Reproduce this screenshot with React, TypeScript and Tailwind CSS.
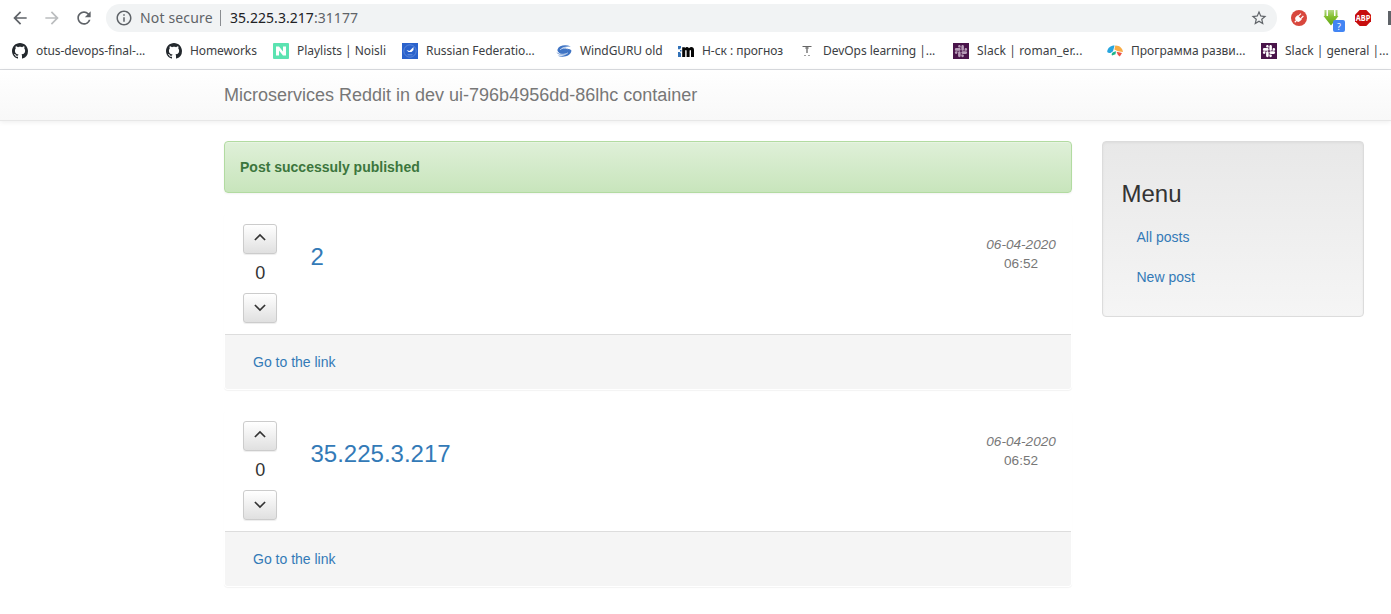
import type { ReactNode } from "react";
import { FaSlack } from "react-icons/fa";
import { MdArrowBack, MdArrowForward, MdRefresh, MdInfoOutline, MdStarBorder } from "react-icons/md";

const GithubIcon = () => (
  <svg width="16" height="16" viewBox="0 0 16 16" fill="#24292e">
    <path d="M8 0C3.58 0 0 3.58 0 8c0 3.54 2.29 6.53 5.47 7.59.4.07.55-.17.55-.38 0-.19-.01-.82-.01-1.49-2.01.37-2.53-.49-2.69-.94-.09-.23-.48-.94-.82-1.13-.28-.15-.68-.52-.01-.53.63-.01 1.08.58 1.23.82.72 1.21 1.87.87 2.33.66.07-.52.28-.87.51-1.07-1.78-.2-3.64-.89-3.64-3.95 0-.87.31-1.59.82-2.15-.08-.2-.36-1.02.08-2.12 0 0 .67-.21 2.2.82.64-.18 1.32-.27 2-.27.68 0 1.36.09 2 .27 1.53-1.04 2.2-.82 2.2-.82.44 1.1.16 1.92.08 2.12.51.56.82 1.27.82 2.15 0 3.07-1.87 3.75-3.65 3.95.29.25.54.73.54 1.48 0 1.07-.01 1.93-.01 2.2 0 .21.15.46.55.38A8.013 8.013 0 0016 8c0-4.42-3.58-8-8-8z" />
  </svg>
);

const NoisliIcon = () => (
  <svg width="16" height="16" viewBox="0 0 16 16">
    <rect width="16" height="16" rx="1" fill="#5be3b1" />
    <path d="M3 3.500H6L10 8.600V3.500H13V12.500H10L6 7.400V12.500H3Z" fill="#fff" />
  </svg>
);

const ChessIcon = () => (
  <svg width="16" height="16" viewBox="0 0 16 16">
    <rect width="16" height="16" fill="#2a62cc" />
    <circle cx="8" cy="8" r="6.2" fill="none" stroke="#6f96df" strokeWidth="0.7" />
    <path d="M4.500 7L7.500 8L11.500 4V7L9.500 9H6.500Z" fill="#fff" />
    <path d="M5.500 11.800h5" stroke="#7fa3e4" strokeWidth="0.8" />
  </svg>
);

const WindguruIcon = () => (
  <svg width="16" height="16" viewBox="0 0 16 16">
    <ellipse cx="8" cy="8.2" rx="5.6" ry="3.6" fill="#3f74c4" />
    <path d="M1.500 6.500C3 2.300 9.500 1.200 14.800 3.600C10.500 3.300 6.500 3.600 4.200 6.500C3.400 7.600 3.800 9 4.800 9.800C2.500 9.400 1 8.300 1.500 6.500Z" fill="#3f74c4" />
    <path d="M15.400 7.500C15.400 12.500 8 15.200 1.600 12.700C6 12.900 10 12.400 12 9.700C13 8.200 12.500 6.700 11.400 5.900C13.800 5.900 15.200 6.500 15.400 7.500Z" fill="#3f74c4" />
    <path d="M4.200 6.700C6 4.800 9.200 4.800 11.800 5.800" stroke="#fff" strokeWidth="0.7" fill="none" />
    <path d="M0.800 9.400C3.500 11.700 8.500 12 11.800 9.900" stroke="#fff" strokeWidth="0.7" fill="none" />
    <path d="M0.500 8.800C2 11 5.500 11.900 8.500 11.300C5.500 12.500 1 11.800 0.500 8.800Z" fill="#3f74c4" />
  </svg>
);

const ForecastIcon = () => (
  <svg width="16" height="16" viewBox="0 0 16 16">
    <path d="M0 3h3v2l-1.2 1.300H0ZM0 9h1.800L3 10.500V14H0ZM2 7h1.500v1.500H2Z" fill="#3272b8" />
    <path d="M4.200 4.200H6.900V5.200C8 3.700 10 3.700 11 5.200C12.700 3.400 16 3.700 16 7V14H13V7.500Q12.300 6.600 11.600 7.500V14H8.600V7.500Q7.900 6.600 7.200 7.500V14H4.200Z" fill="#050505" />
  </svg>
);

const LearningIcon = () => (
  <svg width="16" height="16" viewBox="0 0 16 16" fill="none" stroke="#666">
    <path d="M3.500 3.500h9" strokeWidth="1" />
    <path d="M6 5h4" strokeWidth="0.8" />
    <path d="M8 4v6" strokeWidth="1.3" />
    <path d="M5 12.500h2M9 12.500h2" strokeWidth="0.9" opacity="0.7" />
  </svg>
);

const SlackIcon = ({ dim }: { dim?: boolean }) => (
  <span className={`flex size-4 items-center justify-center bg-[#4a154b] ${dim ? "text-[#b79db8]" : "text-white"}`}>
    <FaSlack size={14} />
  </span>
);

const CourseIcon = () => (
  <svg width="16" height="16" viewBox="0 0 16 16">
    <path d="M0.200 8.600C0.500 5 3.500 2.500 7.600 2.500L6 8.200L3.500 9.900C1.500 10.300 0.200 9.800 0.200 8.600Z" fill="#27a5de" />
    <path d="M8.300 2.500C12.500 2.300 15.800 5.300 15.900 9L11 8.200L7.400 6.500Z" fill="#f9ac45" />
    <path d="M6.500 9L9 8.300L8.500 11.200L5 12.600Q3.800 10.500 6.500 9Z" fill="#1bb58b" />
    <path d="M9.500 8.700L15 9.900L12.800 13.500Q10.500 12.200 9.500 8.700Z" fill="#ec5146" />
  </svg>
);

type Bookmark = { label: string; layout: string; icon: ReactNode };

const bookmarks: Bookmark[] = [
  { label: "otus-devops-final-...", layout: "w-[154px] tracking-[-0.08px]", icon: <GithubIcon /> },
  { label: "Homeworks", layout: "w-[107px] tracking-[-0.1px]", icon: <GithubIcon /> },
  { label: "Playlists | Noisli", layout: "w-[129px] tracking-[-0.03px]", icon: <NoisliIcon /> },
  { label: "Russian Federatio...", layout: "w-[154px] tracking-[-0.05px]", icon: <ChessIcon /> },
  { label: "WindGURU old", layout: "w-[122px] tracking-[-0.1px]", icon: <WindguruIcon /> },
  { label: "Н-ск : прогноз", layout: "w-[121px] tracking-[-0.05px]", icon: <ForecastIcon /> },
  { label: "DevOps learning |...", layout: "w-[154px] tracking-[-0.05px]", icon: <LearningIcon /> },
  { label: "Slack | roman_er...", layout: "w-[154px] tracking-[0.1px]", icon: <SlackIcon dim /> },
  { label: "Программа разви...", layout: "w-[154px]", icon: <CourseIcon /> },
  { label: "Slack | general |...", layout: "w-[130px]", icon: <SlackIcon /> },
];

const PlugIcon = () => (
  <svg width="16" height="16" viewBox="0 0 16 16">
    <circle cx="8" cy="8" r="8" fill="#d8473d" />
    <g transform="rotate(45 8 8)">
      <path d="M5 7h6v2a3 3 0 0 1-6 0Z" fill="#fff" />
      <path d="M6.300 3.500v4M9.700 3.500v4M8 11v3" stroke="#fff" strokeWidth="1.2" />
    </g>
  </svg>
);

const DownloadIcon = () => (
  <span className="relative block size-4">
    <svg width="16" height="16" viewBox="0 0 16 16">
      <defs>
        <linearGradient id="arrow" x1="0" y1="0" x2="0" y2="1">
          <stop offset="0" stopColor="#b5d985" />
          <stop offset="0.45" stopColor="#82bf2c" />
          <stop offset="1" stopColor="#63a51b" />
        </linearGradient>
      </defs>
      <path d="M1.500 0H3.500V6H5V0H11V6H12.500V0H14.500V6H15.500L8 15.500L0.500 6H1.500Z" fill="url(#arrow)" />
    </svg>
    <span className="absolute top-[10px] left-[10px] flex h-3 w-3 items-center justify-center rounded-[2px] bg-[#4285f4] text-[9px] leading-none text-white">
      ?
    </span>
  </span>
);

const AdblockIcon = () => (
  <svg width="16" height="16" viewBox="0 0 16 16">
    <path d="M4.700 0h6.600L16 4.700v6.600L11.300 16H4.700L0 11.300V4.700Z" fill="#c70d0d" />
    <text x="8" y="11" textAnchor="middle" fontSize="8" fontWeight="700" fill="#fff" fontFamily="Open Sans, sans-serif" textLength="14.5" lengthAdjust="spacingAndGlyphs">ABP</text>
  </svg>
);

const Browser = () => (
  <header className="h-[70px] overflow-hidden border-b border-[#dadce0] bg-white font-['Noto_Sans',sans-serif]">
    <div className="flex h-9 w-[1400px] items-center text-[#5f6368]">
      <div className="flex w-[106px] shrink-0 items-center gap-3 pl-[10px]">
        <MdArrowBack size={20} />
        <MdArrowForward size={20} className="text-[#bbbdbf]" />
        <MdRefresh size={20} />
      </div>
      <div className="flex h-7 w-[1171px] shrink-0 items-center rounded-full bg-[#f1f3f4] pr-[9px] pl-[9px] text-sm">
        <MdInfoOutline size={18} />
        <span className="ml-[7px] w-20 tracking-[0.15px]">Not secure</span>
        <span className="h-4 w-px bg-[#8a8d91]" />
        <span className="ml-[9px] flex-1 tracking-[0.05px]">
          <span className="text-[#202124]">35.225.3.217</span>:31177
        </span>
        <MdStarBorder size={18} />
      </div>
      <div className="flex items-center gap-4 pl-[14px]">
        <PlugIcon />
        <DownloadIcon />
        <AdblockIcon />
        <span className="ml-px h-[14px] w-4 bg-[#5f6368]" />
      </div>
    </div>
    <nav className="flex h-[30px] items-center pl-3 text-xs text-[#3c4043]">
      {bookmarks.map((b) => (
        <a key={b.label} className={`flex shrink-0 items-center gap-2 whitespace-nowrap ${b.layout}`}>
          <span className="shrink-0">{b.icon}</span>
          {b.label}
        </a>
      ))}
    </nav>
  </header>
);

const VoteButton = ({ down }: { down?: boolean }) => (
  <button className="flex h-[30px] w-[34px] items-center justify-center rounded-[3px] border border-[#ccc] bg-linear-to-b from-white to-[#e0e0e0] text-[#333] shadow-[inset_0_1px_0_rgba(255,255,255,.15),0_1px_1px_rgba(0,0,0,.075)]">
    <svg width="12" height="12" viewBox="0 0 12 12" fill="none" stroke="currentColor" strokeWidth="1.7">
      <path d={down ? "M0.900 3L6 8L11.100 3" : "M0.900 7L6 2L11.100 7"} />
    </svg>
  </button>
);

const Post = ({ title }: { title: string }) => (
  <article className="mb-5 h-[177px] rounded-[4px] border border-transparent bg-white shadow-[0_1px_1px_rgba(0,0,0,.05)]">
    <div className="flex h-[120px] pt-[10px] pl-[18px]">
      <div className="flex w-[34px] flex-col items-center">
        <VoteButton />
        <span className="h-[39px] pl-[0.4px] text-lg leading-[38px]">0</span>
        <VoteButton down />
      </div>
      <h3 className="mt-5 ml-[33.5px] flex-1 text-2xl leading-[26px] text-[#337ab7]">{title}</h3>
      <div className="mt-[11px] mr-[15.15px] text-center text-[13.6px] leading-[19.4px] text-[#777]">
        <em className="block">06-04-2020</em>
        <span className="block">06:52</span>
      </div>
    </div>
    <footer className="h-[55px] rounded-b-[3px] border-t border-[#ddd] bg-[#f5f5f5] pt-[17px] pl-7 text-sm leading-5 text-[#337ab7]">
      <a>Go to the link</a>
    </footer>
  </article>
);

export default function App() {
  return (
    <div className="h-[614px] overflow-hidden bg-white font-['Liberation_Sans',Arial,sans-serif] text-sm text-[#333]">
      <Browser />
      <div className="mb-5 h-[51px] border-b border-[#e7e7e7] bg-linear-to-b from-white to-[#f8f8f8] pl-56 text-lg leading-[50px] text-[#777] shadow-[0_1px_5px_rgba(0,0,0,.075)]">
        Microservices Reddit in dev ui-796b4956dd-86lhc container
      </div>
      <main className="flex items-start gap-[30px] pl-56">
        <section className="w-[848px]">
          <div className="mb-5 rounded-[4px] border border-[#b2dba1] bg-linear-to-b from-[#dff0d8] to-[#c8e5bc] p-[15px] leading-5 font-bold text-[#3c763d] shadow-[inset_0_1px_0_rgba(255,255,255,.25),0_1px_2px_rgba(0,0,0,.05)]">
            Post successuly published
          </div>
          <Post title="2" />
          <Post title="35.225.3.217" />
        </section>
        <aside className="h-44 w-[262px] rounded-[4px] border border-[#dcdcdc] bg-linear-to-b from-[#e8e8e8] to-[#f5f5f5] py-[19px] pr-[19px] pl-[18.5px] shadow-[inset_0_1px_3px_rgba(0,0,0,.05),0_1px_0_rgba(255,255,255,.1)]">
          <h3 className="mt-5 mb-[10px] text-2xl leading-[26px]">Menu</h3>
          <nav className="flex flex-col text-[#337ab7]">
            <a className="px-[15px] py-[10px] leading-5">All posts</a>
            <a className="px-[15px] py-[10px] leading-5">New post</a>
          </nav>
        </aside>
      </main>
    </div>
  );
}
